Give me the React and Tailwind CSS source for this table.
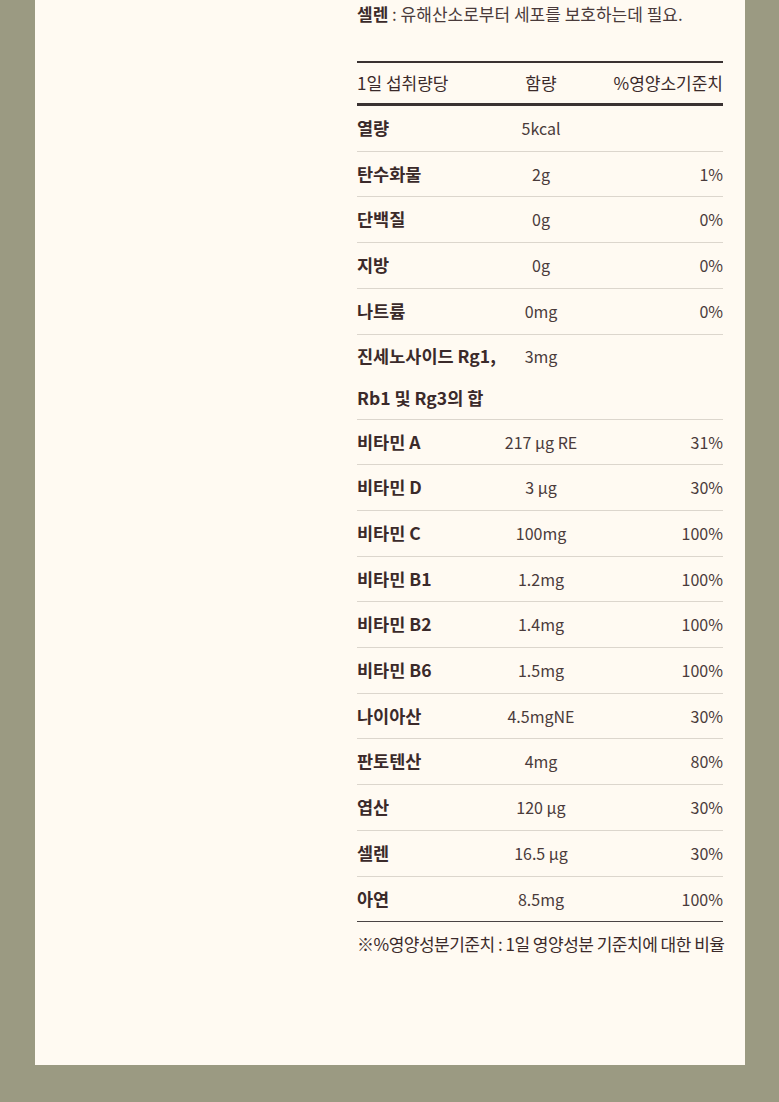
import React from "react";

const rows = [
  ["열량", "5kcal", ""],
  ["탄수화물", "2g", "1%"],
  ["단백질", "0g", "0%"],
  ["지방", "0g", "0%"],
  ["나트륨", "0mg", "0%"],
  ["GINSENG", "3mg", ""],
  ["비타민 A", "217 µg RE", "31%"],
  ["비타민 D", "3 µg", "30%"],
  ["비타민 C", "100mg", "100%"],
  ["비타민 B1", "1.2mg", "100%"],
  ["비타민 B2", "1.4mg", "100%"],
  ["비타민 B6", "1.5mg", "100%"],
  ["나이아산", "4.5mgNE", "30%"],
  ["판토텐산", "4mg", "80%"],
  ["엽산", "120 µg", "30%"],
  ["셀렌", "16.5 µg", "30%"],
  ["아연", "8.5mg", "100%"],
];

const font = { fontFamily: '"Noto Sans CJK KR", "Noto Sans", sans-serif' };

export default function App() {
  return (
    <div className="min-h-[1102px] bg-[#9b9a82]" style={font}>
      <div className="ml-[35px] w-[710px] h-[1065px] bg-[#fffaf2] pl-[322px]">
        <div className="w-[366px]">
          <p className="text-[17px] leading-[28px] text-[#4a3b3b] whitespace-nowrap">
            <span className="font-bold text-[#3b2a2a]">셀렌</span> : 유해산소로부터 세포를 보호하는데 필요.
          </p>

          <div className="mt-[33px] border-t-2 border-[#3a3232]">
            <div className="grid grid-cols-[140px_88px_1fr] border-b-[3px] border-[#3a3232] text-[17px] leading-[40px] text-[#3b2a2a]">
              <div className="whitespace-nowrap">1일 섭취량당</div>
              <div className="text-center">함량</div>
              <div className="text-right whitespace-nowrap">%영양소기준치</div>
            </div>

            {rows.map(([name, val, pct], i) => {
              const last = i === rows.length - 1;
              const ginseng = name === "GINSENG";
              const lh = ginseng ? "leading-[42px]" : "leading-[44.7px]";
              return (
                <div
                  key={i}
                  className={
                    "grid grid-cols-[140px_88px_1fr] " +
                    (last ? "border-b border-[#4a4444]" : "border-b border-[#dcd6cd]")
                  }
                >
                  <div className={"text-[17.5px] font-bold text-[#3b2a2a] whitespace-nowrap " + lh}>
                    {ginseng ? (
                      <>
                        진세노사이드 Rg1,
                        <br />
                        Rb1 및 Rg3의 합
                      </>
                    ) : (
                      name
                    )}
                  </div>
                  <div className={"text-[16px] text-center text-[#4a3b3b] whitespace-nowrap " + lh}>
                    {val}
                  </div>
                  <div className={"text-[16px] text-right text-[#4a3b3b] " + lh}>{pct}</div>
                </div>
              );
            })}
          </div>

          <p className="mt-[9px] text-[17px] leading-[26px] text-[#3b2a2a] tracking-[-0.5px] whitespace-nowrap">
            ※%영양성분기준치 : 1일 영양성분 기준치에 대한 비율
          </p>
        </div>
      </div>
    </div>
  );
}
